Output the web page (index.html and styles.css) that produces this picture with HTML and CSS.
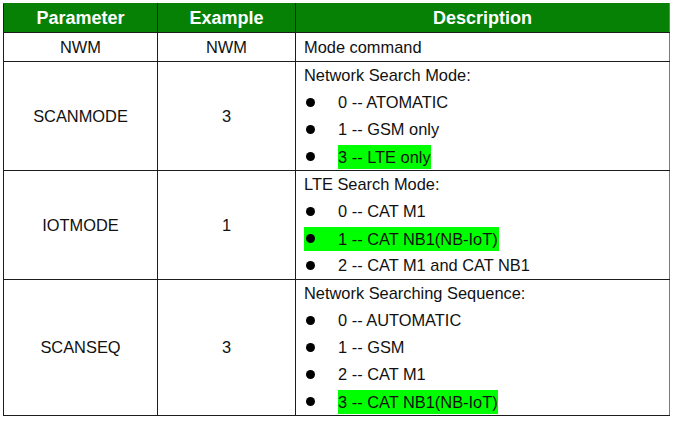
FILE: index.html
```html
<!DOCTYPE html>
<html>
<head>
<meta charset="utf-8">
<link rel="stylesheet" href="styles.css">
</head>
<body>
<table class="params">
  <colgroup>
    <col class="c1"><col class="c2"><col class="c3">
  </colgroup>
  <thead>
    <tr><th>Parameter</th><th>Example</th><th>Description</th></tr>
  </thead>
  <tbody>
    <tr class="single">
      <td class="center">NWM</td>
      <td class="center">NWM</td>
      <td class="desc"><div class="line">Mode command</div></td>
    </tr>
    <tr>
      <td class="center">SCANMODE</td>
      <td class="center">3</td>
      <td class="desc">
        <div class="line">Network Search Mode:</div>
        <ul class="opts">
          <li><span class="item"><span class="dot"></span><span>0 -- ATOMATIC</span></span></li>
          <li><span class="item"><span class="dot"></span><span>1 -- GSM only</span></span></li>
          <li><span class="item"><span class="dot"></span><span class="hl">3 -- LTE only</span></span></li>
        </ul>
      </td>
    </tr>
    <tr>
      <td class="center">IOTMODE</td>
      <td class="center">1</td>
      <td class="desc">
        <div class="line">LTE Search Mode:</div>
        <ul class="opts">
          <li><span class="item"><span class="dot"></span><span>0 -- CAT M1</span></span></li>
          <li><span class="item hl"><span class="dot"></span><span>1 -- CAT NB1(NB-IoT)</span></span></li>
          <li><span class="item"><span class="dot"></span><span>2 -- CAT M1 and CAT NB1</span></span></li>
        </ul>
      </td>
    </tr>
    <tr>
      <td class="center">SCANSEQ</td>
      <td class="center">3</td>
      <td class="desc">
        <div class="line">Network Searching Sequence:</div>
        <ul class="opts">
          <li><span class="item"><span class="dot"></span><span>0 -- AUTOMATIC</span></span></li>
          <li><span class="item"><span class="dot"></span><span>1 -- GSM</span></span></li>
          <li><span class="item"><span class="dot"></span><span>2 -- CAT M1</span></span></li>
          <li><span class="item"><span class="dot"></span><span class="hl">3 -- CAT NB1(NB-IoT)</span></span></li>
        </ul>
      </td>
    </tr>
  </tbody>
</table>
</body>
</html>
```
FILE: styles.css
```css
html, body {
  margin: 0;
  padding: 0;
  background: #ffffff;
}
body {
  padding: 3px 0 0 3px;
  font-family: "Liberation Sans", Arial, sans-serif;
  color: #111111;
}
.params {
  border-collapse: collapse;
  table-layout: fixed;
  width: 666px;
  font-size: 16.4px;
}
.c1 { width: 154px; }
.c2 { width: 138px; }
.c3 { width: 374px; }
.params th,
.params td {
  border: 1px solid #1c1c1c;
  padding: 0;
}
.params th {
  background: #068106;
  color: #ffffff;
  font-weight: bold;
  font-size: 18px;
  height: 28px;
  line-height: 28px;
  text-align: center;
  border-top-color: #068106;
}
.params th:first-child { border-left-color: #1c1c1c; }
.params td.center {
  text-align: center;
  vertical-align: middle;
}
.single td { height: 28px; }
.params td.desc {
  padding-left: 8px;
  vertical-align: top;
}
.params td:last-child,
.params th:last-child {
  border-right-color: #7a7a7a;
}
.line {
  height: 27px;
  line-height: 27px;
}
.single .line { height: 28px; line-height: 28px; }
.opts {
  list-style: none;
  margin: 0;
  padding: 0;
}
.opts li {
  height: 27px;
  display: flex;
  align-items: center;
}
.item {
  display: inline-flex;
  align-items: center;
  height: 24px;
  padding-left: 2px;
  padding-right: 1px;
}
.dot {
  width: 9px;
  height: 9px;
  border-radius: 50%;
  background: #000000;
  margin-right: 23px;
  flex: none;
}
.hl {
  background: #00ff00;
  display: inline-block;
  height: 24px;
  line-height: 24px;
}
.item.hl {
  display: inline-flex;
}
```
